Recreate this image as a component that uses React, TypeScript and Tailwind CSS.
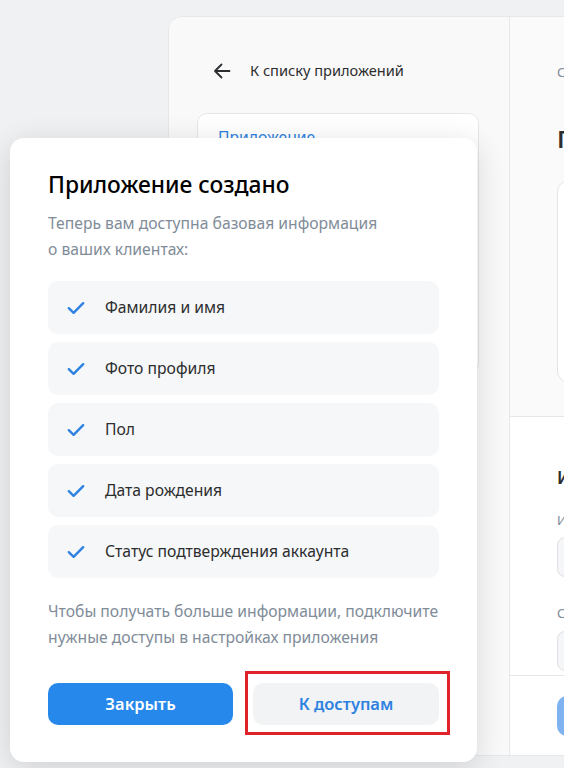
import React from "react";

const items = [
  "Фамилия и имя",
  "Фото профиля",
  "Пол",
  "Дата рождения",
  "Статус подтверждения аккаунта",
];

function Check() {
  return (
    <svg width="18" height="14" viewBox="0 0 18 14" fill="none">
      <path
        d="M1.8 7.2L6.6 11.8L16.2 2.2"
        stroke="#2d81e0"
        strokeWidth="2.4"
        strokeLinecap="round"
        strokeLinejoin="round"
      />
    </svg>
  );
}

function ArrowLeft() {
  return (
    <svg width="18" height="16" viewBox="0 0 18 16" fill="none">
      <path
        d="M16.5 8H2M8.5 1.5L2 8l6.5 6.5"
        stroke="#2c2d2e"
        strokeWidth="1.8"
        strokeLinecap="round"
        strokeLinejoin="round"
      />
    </svg>
  );
}

export default function App() {
  return (
    <div
      className="relative h-[768px] w-[564px] overflow-hidden bg-[#f0f1f3] text-[#2c2d2e]"
      style={{ fontFamily: '"Noto Sans", "Open Sans", sans-serif' }}
    >
      {/* page card */}
      <div className="pl-[168px] pt-[16px]">
        <div className="flex h-[740px] w-[600px] overflow-hidden rounded-tl-[14px] rounded-bl-[4px] border border-[#e6e7e9] bg-white">
          {/* left column */}
          <div className="flex w-[341px] shrink-0 flex-col border-r border-[#e6e7e9] bg-[#f9f9f9]">
            <div className="mt-[44px] flex h-[20px] items-center gap-[19px] pl-[44px]">
              <ArrowLeft />
              <span className="text-[14.6px]">К списку приложений</span>
            </div>
            <div className="ml-[28px] mt-[32px] h-[260px] w-[282px] rounded-[10px] border border-[#e6e7e9] bg-white px-[20px] pt-[11px]">
              <span className="text-[15.7px] text-[#2d81e0]">Приложение</span>
            </div>
          </div>
          {/* right column */}
          <div className="flex w-[258px] shrink-0 flex-col">
            <div className="flex h-[400px] flex-col border-b border-[#e6e7e9] bg-[#fafafb] pl-[47px]">
              <div className="mt-[46px] whitespace-nowrap text-[13px] text-[#818c99]">
                Сведения о приложении
              </div>
              <div className="mt-[38px] whitespace-nowrap text-[24px] font-semibold">
                Приложение
              </div>
              <div className="mt-[23px] h-[203px] w-[260px] rounded-[12px] border border-[#e3e4e6] bg-white" />
            </div>
            <div className="flex flex-col pl-[47px]">
              <div className="mt-[48px] whitespace-nowrap text-[17px] font-semibold">
                Информация
              </div>
              <div className="mt-[20px] whitespace-nowrap text-[13px] text-[#818c99]">
                Имя
              </div>
              <div className="mt-[7px] h-[40px] w-[260px] rounded-[8px] border border-[#dfe1e5] bg-[#f5f6f8]" />
              <div className="mt-[27px] whitespace-nowrap text-[13px] text-[#818c99]">
                Сайт
              </div>
              <div className="mt-[7px] h-[40px] w-[260px] rounded-[8px] border border-[#dfe1e5] bg-[#f5f6f8]" />
            </div>
            <div className="mt-[4px] border-t border-[#e6e7e9] pl-[47px] pt-[20px]">
              <div className="h-[40px] w-[160px] rounded-[10px] bg-[#7fb3f0]" />
            </div>
          </div>
        </div>
      </div>

      {/* modal */}
      <div className="absolute left-[10px] top-[138px] flex h-[624px] w-[467px] flex-col rounded-[14px] bg-white px-[38px] pt-[32px] shadow-[0_6px_30px_rgba(0,0,0,0.14)]">
        <h2 className="text-[22.8px] font-medium leading-[30px] text-[#000]">
          Приложение создано
        </h2>
        <p className="mt-[10px] text-[15.7px] leading-[26px] text-[#818c99]">
          Теперь вам доступна базовая информация
          <br />о ваших клиентах:
        </p>
        <div className="mt-[19px] flex flex-col gap-[8px]">
          {items.map((t) => (
            <div
              key={t}
              className="flex h-[53px] items-center gap-[20px] rounded-[10px] bg-[#f6f7f9] pl-[19px]"
            >
              <Check />
              <span className="text-[15.7px]">{t}</span>
            </div>
          ))}
        </div>
        <p className="mt-[20px] text-[15.7px] leading-[26px] text-[#818c99]">
          Чтобы получать больше информации, подключите
          <br />
          нужные доступы в настройках приложения
        </p>
        <div className="mt-[33px] flex gap-[20px]">
          <button className="flex h-[42px] w-[186px] items-center justify-center rounded-[10px] bg-[#2688eb] text-[16.5px] font-semibold text-white">
            Закрыть
          </button>
          <div className="relative">
            <button className="flex h-[42px] w-[186px] items-center justify-center rounded-[10px] bg-[#f2f3f5] text-[16.5px] font-semibold text-[#2d81e0]">
              К доступам
            </button>
            <div className="pointer-events-none absolute -bottom-[10px] -left-[8px] -right-[11px] -top-[12px] border-[3px] border-[#e0232b]" />
          </div>
        </div>
      </div>
    </div>
  );
}
